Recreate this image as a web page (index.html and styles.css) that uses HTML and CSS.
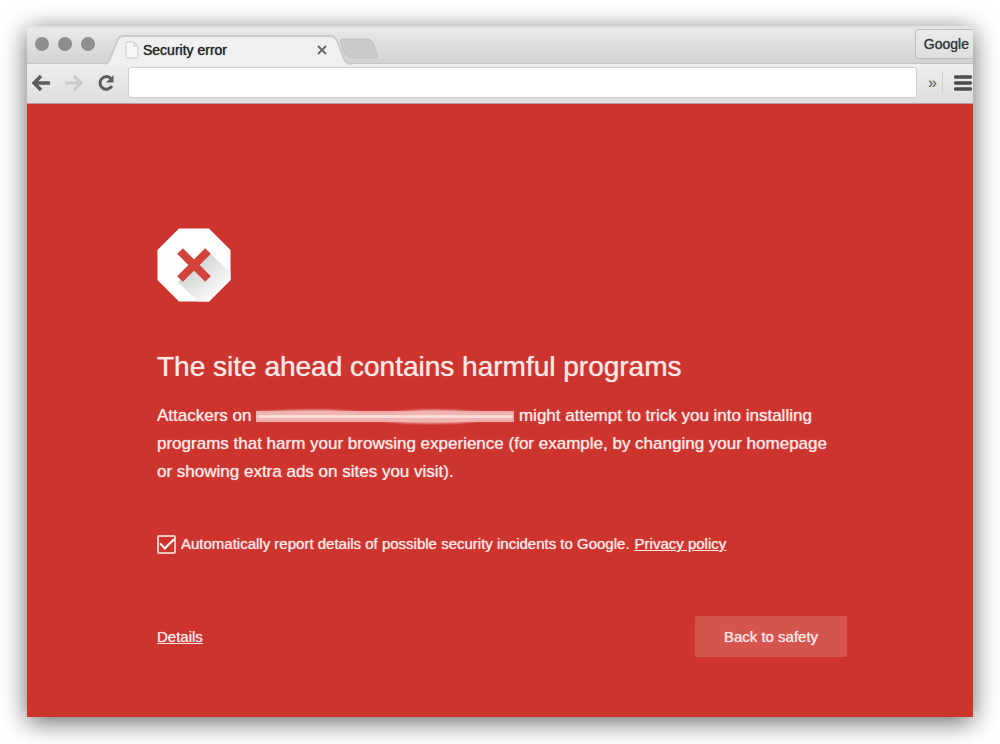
FILE: index.html
```html
<!DOCTYPE html>
<html lang="en">
<head>
<meta charset="utf-8">
<title>Security error</title>
<link rel="stylesheet" href="styles.css">
</head>
<body>
<div class="window">
  <header class="titlebar">
    <div class="lights"><span class="light"></span><span class="light"></span><span class="light"></span></div>
    <div class="tab">
      <svg class="tab-shape" viewBox="0 0 246 30" aria-hidden="true"><path d="M0 29C3 28 4 27 5 24L12 6Q14 1 19 1H225Q230 1 232 6L239 24Q241 29 246 29V30H0Z" fill="#f0f0f0"/><path d="M0 29C3 28 4 27 5 24L12 6Q14 1 19 1H225Q230 1 232 6L239 24Q241 29 246 29" fill="none" stroke="#cacaca" stroke-width="2"/></svg>
      <svg class="page-icon" viewBox="0 0 14 18" aria-hidden="true"><path d="M1 1H9L13 5V17H1ZM9 1V5H13" fill="#f8f8f8" stroke="#c9c9c9"/></svg>
      <span class="tab-title">Security error</span>
      <button class="tab-close" aria-label="Close tab"><svg viewBox="0 0 10 10"><path d="M1 1L9 9M9 1L1 9" stroke="#6a6a6a" stroke-width="2"/></svg></button>
    </div>
    <button class="new-tab" aria-label="New tab"><svg viewBox="0 0 40 22"><path d="M4 1H28Q32 1 34 5L38 16Q39 20 36 20H13Q8 20 6 16L1 4Q1 1 4 1Z" fill="#cbcbcb" stroke="#c0c0c0"/></svg></button>
    <button class="profile">Google</button>
  </header>
  <nav class="toolbar" aria-label="Browser">
    <button class="nav-button" aria-label="Back"><svg viewBox="0 0 20 18"><path d="M18 9H3M9 2L2 9L9 16" fill="none" stroke="#5c5c5c" stroke-width="3.4"/></svg></button>
    <button class="nav-button" aria-label="Forward"><svg viewBox="0 0 20 18"><path d="M1 9H16M10 2L17 9L10 16" fill="none" stroke="#cacaca" stroke-width="3.2"/></svg></button>
    <button class="nav-button" aria-label="Reload"><svg viewBox="0 0 20 18"><path d="M14.5 4.2A6.300 6.300 0 1 0 15.800 12" fill="none" stroke="#5c5c5c" stroke-width="3"/><path d="M17.500 1V8.500H10Z" fill="#5c5c5c"/></svg></button>
    <input class="address" type="text" aria-label="Address">
    <button class="overflow" aria-label="More extensions">»</button>
    <button class="menu" aria-label="Menu"><svg viewBox="0 0 18 18"><path d="M1.500 3H16.500M1.500 9H16.500M1.500 15H16.500" stroke="#4d4d4d" stroke-width="3.500" stroke-linecap="round"/></svg></button>
  </nav>
  <main class="warning">
    <svg class="stop" viewBox="0 0 74 74" aria-hidden="true">
      <defs><linearGradient id="shade" x1="0.3" y1="0.3" x2="0.8" y2="0.8"><stop offset="0" stop-color="#d6d6d6"/><stop offset="1" stop-color="#fbfbfb"/></linearGradient></defs>
      <path d="M22 0.500H52L73.500 22V52L52 73.500H22L0.500 52V22Z" fill="#fff"/>
      <path d="M54 26L73.500 45V52L52 73.500H41L21 54L37 38Z" fill="url(#shade)"/>
      <path d="M23 23L51 51M51 23L23 51" stroke="#d2433b" stroke-width="8"/>
    </svg>
    <h1 class="heading">The site ahead contains harmful programs</h1>
    <p class="message">Attackers on <svg class="redacted" viewBox="0 0 258 18" aria-hidden="true">
      <defs><filter id="soft"><feGaussianBlur stdDeviation="1"/></filter></defs>
      <path d="M0 4H258V15H0Z" fill="#e9a09d"/>
      <path d="M0 5Q60 1 90 4T150 4T220 5L257 5V14H225Q175 19 125 14L0 14Z" fill="#f0b5b2" filter="url(#soft)"/>
      <path d="M2 9H110L150 10H256" fill="none" stroke="#fbdedc" stroke-width="5" filter="url(#soft)"/>
    </svg> might attempt to trick you into installing programs that harm your browsing experience (for example, by changing your homepage or showing extra ads on sites you visit).</p>
    <div class="report">
      <input class="report-box" id="report" type="checkbox" checked>
      <label for="report">Automatically report details of possible security incidents to Google.</label>
      <a href="#privacy">Privacy policy</a>
    </div>
    <div class="actions">
      <a href="#details">Details</a>
      <button class="safety">Back to safety</button>
    </div>
  </main>
</div>
</body>
</html>
```
FILE: styles.css
```css
* { box-sizing: border-box; }

body {
  margin: 0;
  min-height: 100vh;
  padding: 26px 27px 27px;
  display: flex;
  background: #fff;
  font-family: "Liberation Sans", Arial, sans-serif;
}

button {
  padding: 0;
  border: 0;
  background: none;
  font-family: inherit;
}

svg { display: block; }

.window {
  flex: 1;
  min-width: 0;
  display: flex;
  flex-direction: column;
  box-shadow: 0 5px 24px rgba(0, 0, 0, 0.6);
}

.titlebar {
  height: 38px;
  display: flex;
  align-items: flex-end;
  background: linear-gradient(#eaeaea, #d2d2d2);
  border-top: 2px solid #e2e2e2;
  border-bottom: 1px solid #c4c4c4;
}

.lights {
  display: flex;
  gap: 9px;
  padding: 0 10px 12px 8px;
}

.light {
  width: 14px;
  height: 14px;
  border-radius: 50%;
  background: #8e8e8e;
}

.tab {
  position: relative;
  width: 246px;
  height: 29px;
  margin-bottom: -1px;
  padding: 0 24px 0 20px;
  display: flex;
  align-items: center;
  gap: 4px;
}

.tab-shape {
  position: absolute;
  inset: 0;
  width: 246px;
  height: 30px;
}

.page-icon {
  position: relative;
  width: 14px;
  height: 18px;
}

.tab-title {
  position: relative;
  flex: 1;
  font-size: 14px;
  color: #222;
  text-shadow: 0 0 1px #444;
}

.tab-close {
  position: relative;
  width: 10px;
  height: 10px;
}

.new-tab {
  width: 40px;
  height: 22px;
  margin: 0 0 3px -12px;
}

.profile {
  height: 30px;
  margin: 0 0 4px auto;
  padding: 0 4px 0 8px;
  border: 1px solid #bdbdbd;
  border-right: 0;
  border-radius: 4px 0 0 4px;
  background: linear-gradient(#ececec, #dedede);
  font-size: 14px;
  color: #333;
  text-shadow: 0 0 1px #666;
}

.toolbar {
  height: 40px;
  padding: 0 1px 2px 5px;
  display: flex;
  align-items: center;
  background: linear-gradient(#eeeeee, #dedede);
  border-bottom: 1px solid #b99;
}

.nav-button {
  width: 20px;
  height: 18px;
  margin-right: 12px;
}

.address {
  flex: 1;
  min-width: 0;
  height: 31px;
  padding: 0 8px;
  border: 1px solid #cfcfcf;
  border-radius: 3px;
  background: #fff;
  font-size: 14px;
}

.overflow {
  width: 26px;
  height: 22px;
  padding-left: 6px;
  border-right: 1px solid #cfcfcf;
  font-size: 16px;
  color: #555;
}

.menu {
  width: 18px;
  height: 18px;
  margin-left: 11px;
}

.warning {
  flex: 1;
  padding: 124px 126px 60px 130px;
  background: #cd342e;
  color: #fde8e6;
  text-shadow: 0 0 1px #fbd5d2;
}

.stop {
  width: 74px;
  height: 74px;
}

.heading {
  margin: 49px 0 19px;
  font-size: 28px;
  font-weight: 400;
  line-height: 32px;
}

.message {
  margin: 0;
  padding-right: 16px;
  font-size: 17px;
  line-height: 28px;
}

.redacted {
  display: inline-block;
  width: 258px;
  height: 18px;
  vertical-align: -4px;
}

.report {
  margin-top: 48px;
  display: flex;
  align-items: center;
  gap: 5px;
  font-size: 15px;
  line-height: 20px;
}

.report-box {
  appearance: none;
  width: 19px;
  height: 19px;
  margin: 0;
  border: 2px solid #f7c5c2;
  border-radius: 2px;
  display: grid;
  place-items: center;
}

.report-box:checked::before {
  content: "";
  width: 12px;
  height: 6px;
  margin-bottom: 4px;
  border-left: 2px solid #fff;
  border-bottom: 2px solid #fff;
  transform: rotate(-45deg);
}

.warning a { color: inherit; }

.actions {
  margin-top: 62px;
  display: flex;
  align-items: center;
  justify-content: space-between;
  font-size: 15px;
}

.safety {
  width: 152px;
  height: 41px;
  border-radius: 2px;
  background: #d5544e;
  color: inherit;
  font-size: 15px;
  text-shadow: inherit;
}
```
